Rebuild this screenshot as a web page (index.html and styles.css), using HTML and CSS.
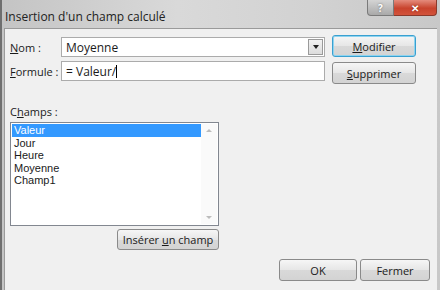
FILE: index.html
```html
<!DOCTYPE html>
<html lang="fr">
<head>
    <meta charset="UTF-8">
    <title>Insertion d'un champ calculé</title>
    <link rel="stylesheet" href="styles.css">
</head>
<body>
    <div class="window">
        <!-- barre de titre -->
        <div class="titlebar">
            <span class="title">Insertion d'un champ calculé</span>
            <div class="caption-btns">
                <span class="cap-btn help">?</span>
                <span class="cap-btn close">&#x2715;</span>
            </div>
        </div>

        <div class="client">
            <div class="top">
                <div class="fields">
                    <div class="row">
                        <span class="label"><u>N</u>om :</span>
                        <div class="textbox combo">
                            <span class="value">Moyenne</span>
                            <span class="drop"><span class="tri"></span></span>
                        </div>
                    </div>
                    <div class="row">
                        <span class="label"><u>F</u>ormule :</span>
                        <div class="textbox">
                            <span class="value">= Valeur/</span><span class="caret"></span>
                        </div>
                    </div>
                </div>
                <div class="side-btns">
                    <span class="btn focused"><span><u>M</u>odifier</span></span>
                    <span class="btn"><span><u>S</u>upprimer</span></span>
                </div>
            </div>

            <div class="champs">
                <span class="label">C<u>h</u>amps :</span>
                <div class="listbox">
                    <div class="items">
                        <div class="item selected">Valeur</div>
                        <div class="item">Jour</div>
                        <div class="item">Heure</div>
                        <div class="item">Moyenne</div>
                        <div class="item">Champ1</div>
                    </div>
                    <div class="scrollbar">
                        <span class="arr up"></span>
                        <span class="arr down"></span>
                    </div>
                </div>
                <div class="insert-row">
                    <span class="btn insert"><span>Insérer <u>u</u>n champ</span></span>
                </div>
            </div>

            <div class="footer">
                <span class="btn ok">OK</span>
                <span class="btn close-btn">Fermer</span>
            </div>
        </div>
    </div>
</body>
</html>
```

FILE: styles.css
```css
body {
    margin: 0;
    width: 440px;
    height: 290px;
    overflow: hidden;
    font-family: 'Open Sans', 'Noto Sans', sans-serif;
    font-size: 11px;
    color: #1a1a1a;
    background-color: #c9c9c9;
}
.window {
    height: 290px;
    display: flex;
    flex-direction: column;
    background: linear-gradient(to right, #c4c4c4, #d9d9d9 40%, #d2d2d2 70%, #c8c8c8);
    border-left: 2px solid #6f6f6f;
    box-sizing: border-box;
}

/* barre de titre */
.titlebar {
    height: 28px;
    display: flex;
    justify-content: space-between;
    align-items: flex-start;
    flex-shrink: 0;
}
.title {
    font-size: 12px;
    color: #222;
    margin: 8px 0 0 3px;
}
.caption-btns {
    display: flex;
    margin-right: 3px;
}
.cap-btn {
    height: 16px;
    display: flex;
    align-items: center;
    justify-content: center;
    color: #fff;
    font-weight: bold;
    font-size: 10px;
    border: 1px solid #7a7a7a;
    border-top: none;
    box-sizing: border-box;
}
.help {
    width: 27px;
    background: linear-gradient(#d4d4d4, #a9a9a9);
    border-radius: 0 0 0 4px;
    text-shadow: 0 0 2px #666;
}
.close {
    width: 43px;
    background: linear-gradient(#e48b7c, #c8432d 55%, #d2543c);
    border-color: #8a3a2c;
    border-radius: 0 0 4px 0;
    border-left: none;
    text-shadow: 0 0 2px #7a2010;
}

.client {
    flex: 1;
    margin: 0 3px 0 2px;
    background-color: #f0f0f0;
    border-top: 1px solid #9a9a9a;
    border-left: 1px solid #9a9a9a;
    padding: 6px 0 0 5px;
    display: flex;
    flex-direction: column;
}
.top {
    display: flex;
    align-items: flex-start;
}
.fields {
    display: flex;
    flex-direction: column;
    gap: 4px;
    margin-top: 2px;
}
.row {
    display: flex;
    align-items: center;
}
.label {
    width: 51px;
    display: inline-block;
}
.textbox {
    width: 264px;
    height: 20px;
    box-sizing: border-box;
    background-color: #fff;
    border: 1px solid #ababab;
    display: flex;
    align-items: center;
    padding-left: 4px;
    font-size: 12px;
}
.combo {
    position: relative;
}
.drop {
    position: absolute;
    right: 1px;
    top: 1px;
    width: 15px;
    height: 16px;
    box-sizing: border-box;
    border: 1px solid #9a9a9a;
    background: linear-gradient(#f2f2f2, #dcdcdc);
    display: flex;
    align-items: center;
    justify-content: center;
}
.tri {
    width: 0;
    height: 0;
    border-left: 3px solid transparent;
    border-right: 3px solid transparent;
    border-top: 4px solid #222;
}
.caret {
    width: 1px;
    height: 13px;
    background-color: #000;
}

.side-btns {
    display: flex;
    flex-direction: column;
    gap: 5px;
    margin-left: 7px;
}
.btn {
    display: inline-flex;
    align-items: center;
    justify-content: center;
    height: 22px;
    box-sizing: border-box;
    border: 1px solid #8a8a8a;
    border-radius: 3px;
    background: linear-gradient(#f6f6f6, #e6e6e6 50%, #d9d9d9 51%, #d3d3d3);
    color: #1a1a1a;
}
.side-btns .btn {
    width: 84px;
}
.btn.focused {
    border-color: #3aa0d0;
    box-shadow: inset 0 0 0 1px #8ed4f0;
}

.champs {
    margin-top: 20px;
    display: flex;
    flex-direction: column;
}
.champs .label {
    width: auto;
    margin-bottom: 3px;
}
.listbox {
    width: 209px;
    height: 104px;
    box-sizing: border-box;
    border: 1px solid #828790;
    background-color: #fff;
    display: flex;
    padding: 1px;
}
.items {
    flex: 1;
    font-family: 'Liberation Sans', Arial, sans-serif;
    font-size: 11px;
}
.item {
    height: 12.6px;
    line-height: 12.6px;
    padding-left: 2px;
}
.item.selected {
    background-color: #3399ff;
    color: #fff;
}
.scrollbar {
    width: 16px;
    display: flex;
    flex-direction: column;
    justify-content: space-between;
    align-items: center;
    padding: 5px 0;
    background-color: #fafafa;
}
.arr {
    width: 0;
    height: 0;
    border-left: 3px solid transparent;
    border-right: 3px solid transparent;
}
.arr.up {
    border-bottom: 3px solid #bcbcbc;
}
.arr.down {
    border-top: 3px solid #bcbcbc;
}
.insert-row {
    width: 209px;
    display: flex;
    justify-content: flex-end;
    margin-top: 3px;
}
.btn.insert {
    width: 102px;
    height: 21px;
}

.footer {
    display: flex;
    justify-content: flex-end;
    gap: 3px;
    margin-top: 9px;
    padding-right: 7px;
}
.footer .btn {
    height: 22px;
}
.btn.ok {
    width: 78px;
}
.btn.close-btn {
    width: 70px;
}
```
